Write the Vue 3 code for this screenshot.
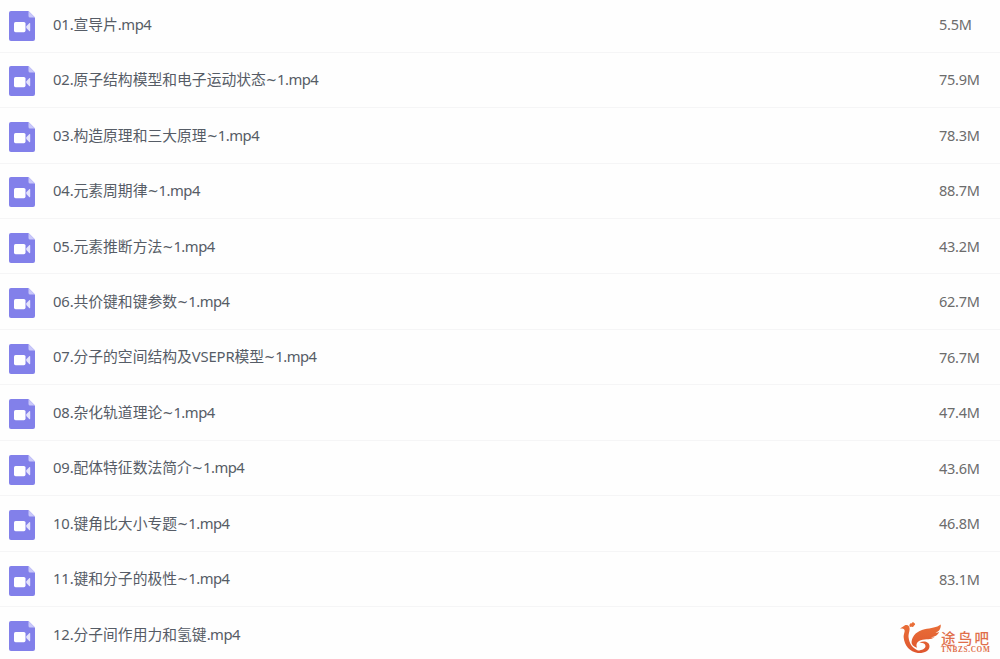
<script setup>
const files = [
  ['01.宣导片.mp4', '5.5M'],
  ['02.原子结构模型和电子运动状态~1.mp4', '75.9M'],
  ['03.构造原理和三大原理~1.mp4', '78.3M'],
  ['04.元素周期律~1.mp4', '88.7M'],
  ['05.元素推断方法~1.mp4', '43.2M'],
  ['06.共价键和键参数~1.mp4', '62.7M'],
  ['07.分子的空间结构及VSEPR模型~1.mp4', '76.7M'],
  ['08.杂化轨道理论~1.mp4', '47.4M'],
  ['09.配体特征数法简介~1.mp4', '43.6M'],
  ['10.键角比大小专题~1.mp4', '46.8M'],
  ['11.键和分子的极性~1.mp4', '83.1M'],
  ['12.分子间作用力和氢键.mp4', ''],
].map(([name, size]) => ({
  name,
  size,
  runs: name.match(/~|[\x20-\x7d]+|[^\x20-\x7e]+/g).map((text) => ({
    text,
    kind: text === '~' ? 'tilde' : !/^[\x20-\x7e]/.test(text) ? 'han' : text.endsWith('mp4') ? 'ext' : 'latin',
  })),
}))
</script>

<template>
  <main class="page">
    <ul class="list">
      <li v-for="f in files" :key="f.name" class="row">
        <svg class="icon" viewBox="0 0 26 30" width="26" height="30">
          <path d="M2 0H19.5L26 6.5V28a2 2 0 0 1-2 2H2a2 2 0 0 1-2-2V2a2 2 0 0 1 2-2Z" fill="#8280ea" />
          <path d="M19.5 0L26 6.5H21a1.5 1.5 0 0 1-1.5-1.5Z" fill="#c9c8fa" />
          <rect x="5" y="11" width="11.5" height="10.2" rx="1.6" fill="#fff" />
          <path d="M17.3 15.2L20.2 12.3Q21.2 11.6 21.2 12.8V19.4Q21.2 20.6 20.2 19.9L17.3 17Z" fill="#e4e3fc" />
        </svg>
        <span class="name"><span v-for="(r, i) in f.runs" :key="i" :class="r.kind">{{ r.text }}</span></span>
        <span class="size">{{ f.size }}</span>
      </li>
    </ul>
    <div class="brand">
      <svg class="bird" viewBox="0 0 42 32" width="42" height="32">
        <defs>
          <linearGradient id="flame" gradientUnits="userSpaceOnUse" x1="0" y1="0" x2="0" y2="32">
            <stop offset="0" stop-color="#ea7038" />
            <stop offset="1" stop-color="#de552e" />
          </linearGradient>
        </defs>
        <g fill="url(#flame)">
          <path d="M0 6.6L3.2 4.5C4.8 2.4 7.6 2.4 9 4.4C10.8 7.4 8.1 11.4 8.6 15.5C9.3 21.5 12.5 26.2 18 28.5C22 28.2 25.6 26.4 25.5 23.9C25.4 21.5 22.6 20.5 19.3 20.8C23.8 18.2 29.2 19.7 29.5 23.9C29.8 28.7 24 31.4 17.8 30.9C10 30.2 4.4 23.6 3.7 15.8C3.3 11.6 5.6 9.3 4.2 7.4C3.3 6.4 1.8 6.4 0 6.6Z" />
          <path d="M9.5 3C9.7 1.6 11 1 11.8 1.6C11.7 .2 13.8-.2 14.2 1.1C15.5 1.5 15.3 3.3 14 3.5C14 4.9 12.1 5.4 11.3 4.4C10.6 5.2 9.9 4.9 9.4 4.3Z" />
          <path d="M11.6 19.5C12.4 13.2 17.5 8.7 24.5 7.2C31.2 5.8 36.7 5.6 40.7 2.4C41.2 6.5 39 9.4 35.4 10.7C37.1 10.8 38.2 10.4 39.2 9.7C37.9 13.3 34.6 14.9 30.7 15.1C32.2 15.6 33.5 15.5 34.6 15.1C31 18.3 25.8 16.8 20.8 18.2C17 19.3 15.6 22.6 17.1 25.7C13.6 24.6 11.3 22.8 11.6 19.5Z" />
        </g>
      </svg>
      <div class="words">
        <span class="cn">途鸟吧</span>
        <span class="en">TNBZS.COM</span>
      </div>
    </div>
  </main>
</template>

<style>
body { background: #fefefe; }
</style>

<style scoped>
.page {
  position: relative;
  width: 1000px;
  height: 659px;
  overflow: hidden;
  background: #fefefe;
  font-family: "Noto Sans", "Noto Sans CJK SC", sans-serif;
}
.list { list-style: none; margin: -2.9px 0 0; padding: 0; }
.row {
  display: flex;
  align-items: center;
  box-sizing: border-box;
  height: 55.48px;
  padding: 3px 0 0 9px;
  border-bottom: 1px solid #f5f5f6;
}
.icon { flex: none; }
.name {
  flex: 1;
  margin: -3.4px 0 0 18px;
  font-size: 14.8px;
  line-height: 20px;
  white-space: nowrap;
  color: #565c66;
}
.han { font-family: "Noto Sans CJK SC", sans-serif; font-weight: 400; }
.latin { letter-spacing: -0.15px; }
.tilde { font-family: "DejaVu Sans Condensed", "DejaVu Sans", sans-serif; font-stretch: condensed; }
.ext { letter-spacing: -0.5px; }
.size {
  width: 61px;
  margin-top: -4px;
  font-size: 14.5px;
  line-height: 20px;
  letter-spacing: -0.25px;
  color: #6c6c6c;
}
.brand {
  position: absolute;
  left: 900px;
  top: 622px;
  display: flex;
  color: #e06e4a;
}
.bird { flex: none; }
.words { display: flex; flex-direction: column; margin: 7px 0 0 -1px; white-space: nowrap; }
.cn {
  font: 500 14.5px/17px "Noto Sans CJK SC", sans-serif;
  letter-spacing: 2.2px;
}
.en {
  font: bold 7.3px/8px "Liberation Serif", serif;
  letter-spacing: .65px;
}
</style>
